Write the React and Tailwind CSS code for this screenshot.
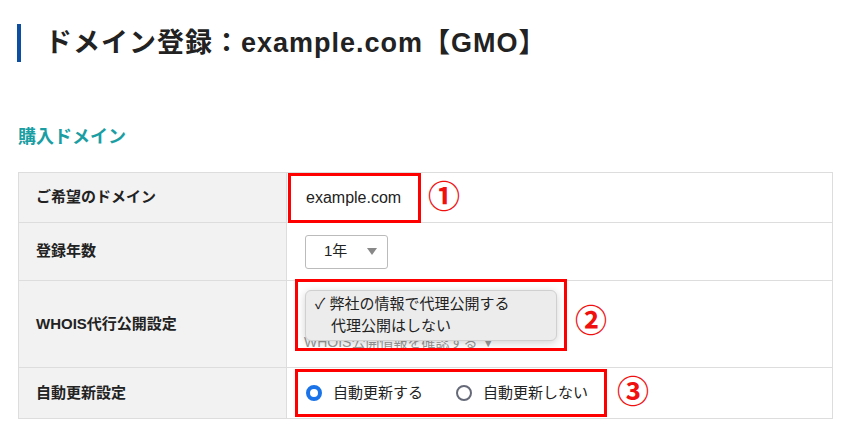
import React from 'react'

const font = { fontFamily: '"Liberation Sans", "Noto Sans CJK JP", sans-serif' }

const Row = ({ label, height, children }) => (
    <div className={`flex border-b border-[#dddddd] ${height}`}>
        <div className="w-[268px] shrink-0 bg-[#f2f2f2] border-r border-[#dddddd] flex items-center pl-[17px] text-[15px] font-bold text-[#222]">
            {label}
        </div>
        <div className="flex-1 relative">{children}</div>
    </div>
)

const Mark = ({ children }) => (
    <span className="text-[#f01010] text-[32px] font-bold leading-none">{children}</span>
)

const App = () => {
    return (
        <div className="w-[850px] h-[440px] bg-white overflow-hidden" style={font}>
            <div className="flex items-center pt-[24px] pl-[17px] h-[62px]">
                <div className="w-[4px] h-[38px] bg-[#0b4ea2]" />
                <h1 className="ml-[24px] text-[27px] font-bold text-[#222] tracking-[1px]">ドメイン登録：example.com【GMO】</h1>
            </div>
            <h2 className="mt-[62px] ml-[18px] text-[18px] font-bold text-[#1a9ea3]">購入ドメイン</h2>
            <div className="mt-[21px] ml-[18px] w-[815px] border-t border-l border-r border-[#dddddd]">
                <Row label="ご希望のドメイン" height="h-[50px]">
                    <div className="flex items-center h-full">
                        <div className="ml-[1px] w-[133px] h-[50px] border-[3px] border-[#ff0000] flex items-center pl-[15px] text-[16px] text-[#222]">
                            example.com
                        </div>
                        <div className="ml-[7px]"><Mark>①</Mark></div>
                    </div>
                </Row>
                <Row label="登録年数" height="h-[58px]">
                    <div className="flex items-center h-full pl-[18px]">
                        <div className="w-[83px] h-[34px] border border-[#bbbbbb] rounded-[3px] flex items-center justify-between pl-[18px] pr-[10px] text-[15px] text-[#222]">
                            <span>1年</span>
                            <svg width="10" height="7" viewBox="0 0 10 7"><path d="M0 0h10L5 7z" fill="#888" /></svg>
                        </div>
                    </div>
                </Row>
                <Row label="WHOIS代行公開設定" height="h-[87px]">
                    <div className="flex items-start h-full pl-[8px]">
                        <div className="relative mt-[-2px] w-[272px] h-[72px] border-[3px] border-[#ff0000] overflow-hidden">
                            <div className="absolute left-[6px] top-[50px] text-[14px] text-[#999] whitespace-nowrap">WHOIS公開情報を確認する ▼</div>
                            <div className="absolute left-[7px] top-[8px] w-[252px] h-[51px] bg-[#ececec] rounded-[6px] border border-[#d0d0d0] shadow-[0_2px_8px_rgba(0,0,0,0.18)] pl-[9px] pt-[2px] text-[15px] text-[#222] leading-[22px]">
                                <div>✓ 弊社の情報で代理公開する</div>
                                <div className="pl-[16px]">代理公開はしない</div>
                            </div>
                        </div>
                        <div className="ml-[8px] mt-[24px]"><Mark>②</Mark></div>
                    </div>
                </Row>
                <Row label="自動更新設定" height="h-[51px]">
                    <div className="flex items-center h-full pl-[8px]">
                        <div className="w-[312px] h-[48px] border-[3px] border-[#ff0000] flex items-center pl-[8px] text-[15px] text-[#222]">
                            <span className="w-[16px] h-[16px] rounded-full border-[4px] border-[#1a73e8] bg-white" />
                            <span className="ml-[11px]">自動更新する</span>
                            <span className="ml-[33px] w-[16px] h-[16px] rounded-full border-[2px] border-[#666a78] bg-white" />
                            <span className="ml-[11px]">自動更新しない</span>
                        </div>
                        <div className="ml-[10px]"><Mark>③</Mark></div>
                    </div>
                </Row>
            </div>
        </div>
    )
}

export default App
